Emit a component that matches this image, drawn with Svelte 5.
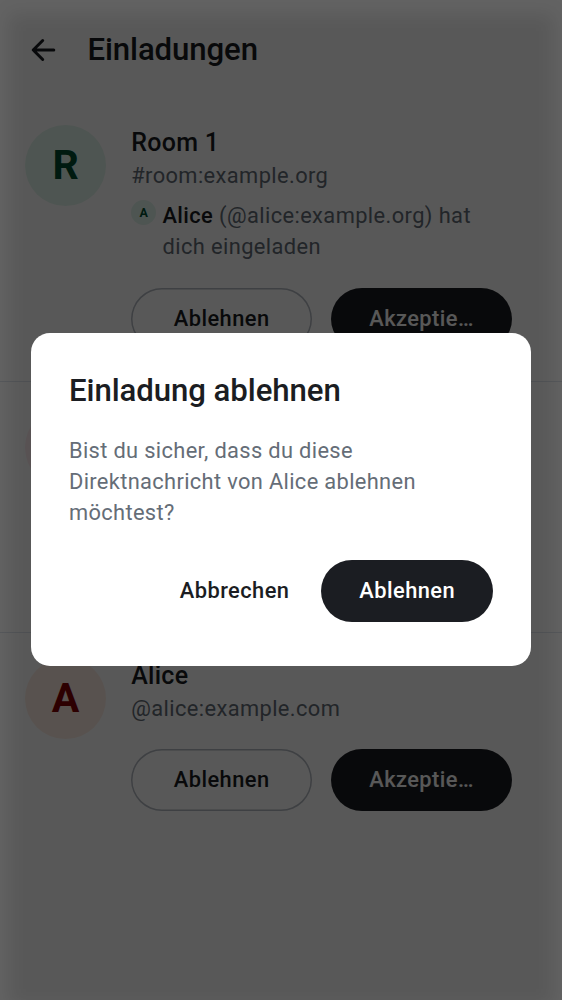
<script>
  const invites = [
    { name: 'Room 1', id: '#room:example.org', letter: 'R', tone: 'green', sender: 'Alice', senderId: '@alice:example.org' },
    { tone: 'pink' },
    { name: 'Alice', id: '@alice:example.com', letter: 'A', tone: 'orange' }
  ];
</script>

<div class="screen">
  <header>
    <svg class="back" width="32" height="32" viewBox="0 0 32 32" fill="none" stroke="#1b1d22" stroke-width="3" stroke-linecap="round" stroke-linejoin="round">
      <path d="M26.8 16H6.4M15.7 6.5L6.2 16l9.5 9.5" />
    </svg>
    <h1>Einladungen</h1>
  </header>

  <main>
    {#each invites as invite}
      <article>
        <div class="avatar {invite.tone}">{invite.letter ?? ''}</div>
        {#if invite.name}
          <div class="content">
            <h2>{invite.name}</h2>
            <p class="id">{invite.id}</p>
            {#if invite.sender}
              <div class="sender">
                <div class="mini green">{invite.sender[0]}</div>
                <p><b>{invite.sender}</b> ({invite.senderId}) hat dich eingeladen</p>
              </div>
            {/if}
            <div class="actions">
              <button class="outlined">Ablehnen</button>
              <button class="filled">Akzeptie…</button>
            </div>
          </div>
        {/if}
      </article>
    {/each}
  </main>

  <div class="scrim">
    <div class="shade"></div>
    <div class="dialog" role="dialog" aria-modal="true">
      <h3>Einladung ablehnen</h3>
      <p>Bist du sicher, dass du diese Direktnachricht von Alice ablehnen möchtest?</p>
      <div class="footer">
        <button class="text">Abbrechen</button>
        <button class="filled confirm">Ablehnen</button>
      </div>
    </div>
  </div>
</div>

<style>
  :global(body) { margin: 0; }
  .screen {
    position: relative;
    width: 562px;
    height: 1000px;
    overflow: hidden;
    background: #fff;
    color: #1b1d22;
    font-family: Roboto, sans-serif;
    font-size: 21.85px;
    line-height: 31.2px;
    letter-spacing: 0.4px;
  }
  h1, h2, h3, p { margin: 0; }
  h1, h2, h3, b { font-weight: 500; }
  header {
    display: flex;
    align-items: center;
    gap: 28.5px;
    height: 100px;
    padding-left: 27px;
    box-sizing: border-box;
  }
  .back { display: block; }
  h1, h3 {
    font-size: 31.2px;
    line-height: 40px;
    letter-spacing: -0.08px;
  }
  h1 { letter-spacing: -0.12px; }
  article {
    display: flex;
    gap: 25px;
    padding: 25px 50px 30px 25px;
    border-bottom: 1.5px solid #e1e6ec;
    height: 251px;
    box-sizing: border-box;
  }
  article:first-child { height: 281.5px; }
  article:last-child { border-bottom: none; }
  .avatar, .mini {
    flex: none;
    display: flex;
    align-items: center;
    justify-content: center;
    border-radius: 50%;
    font-weight: 700;
    letter-spacing: 0;
  }
  .avatar { width: 81.2px; height: 81.2px; padding-top: 1px; box-sizing: border-box; font-size: 41px; }
  .mini { width: 25px; height: 25px; font-size: 12.5px; }
  .green { background: #e3f7ed; color: #004d32; }
  .pink { background: #ffecf0; color: #9f0850; }
  .orange { background: #ffeee4; color: #850006; }
  .content { flex: 1; min-width: 0; }
  h2 {
    padding-top: 1px;
    font-size: 25px;
    line-height: 34px;
    letter-spacing: 0.28px;
  }
  p { color: #656d77; }
  .sender {
    display: flex;
    gap: 6.3px;
    margin-top: 9px;
  }
  .sender b { color: #1b1d22; }
  .actions {
    display: grid;
    grid-template-columns: 1fr 1fr;
    gap: 19px;
    margin-top: 25px;
  }
  button {
    height: 62.4px;
    padding: 0;
    border: none;
    border-radius: 32px;
    background: none;
    color: #1b1d22;
    font: 500 21.85px/31.2px Roboto, sans-serif;
    letter-spacing: 0.44px;
  }
  .outlined { box-shadow: inset 0 0 0 1.5px #b4b9c2; }
  .filled { background: #1b1d22; color: #fff; }
  .scrim {
    position: absolute;
    inset: 0;
    display: flex;
    align-items: center;
    justify-content: center;
    padding-bottom: 1px;
    background: rgba(0, 0, 0, 0.61);
    overflow: hidden;
  }
  .shade {
    position: absolute;
    inset: 14px 9px -6px 9px;
    background: rgba(0, 0, 0, 0.105);
    filter: blur(9px);
  }
  .dialog {
    position: relative;
    width: 500px;
    height: 333px;
    padding: 37.5px 38px;
    box-sizing: border-box;
    border-radius: 19px;
    background: #fff;
  }
  .dialog p {
    margin-top: 24.5px;
    letter-spacing: 0.34px;
  }
  .footer {
    display: flex;
    justify-content: flex-end;
    align-items: center;
    gap: 32px;
    margin-top: 31px;
  }
  .confirm { width: 171.6px; }
</style>
